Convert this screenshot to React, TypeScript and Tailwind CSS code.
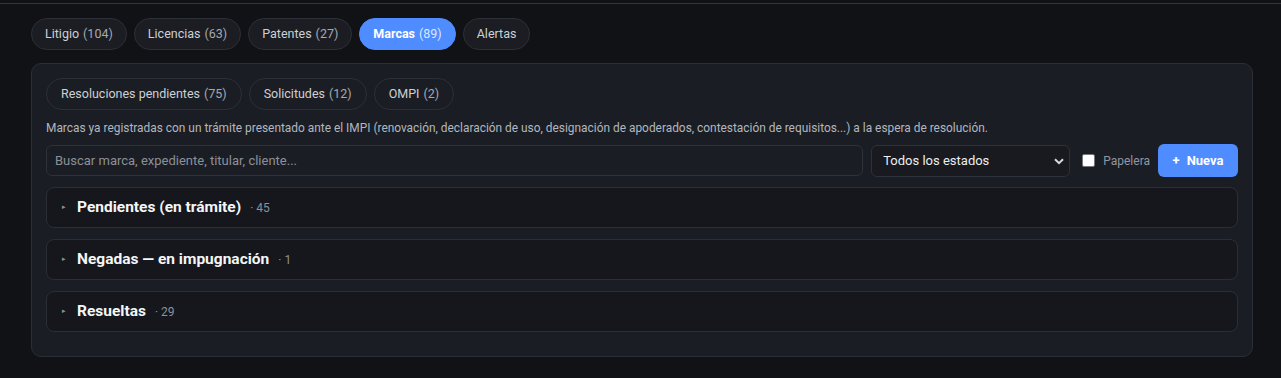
import React from "react";

const tabs = [
  { label: "Litigio", count: "(104)" },
  { label: "Licencias", count: "(63)" },
  { label: "Patentes", count: "(27)" },
  { label: "Marcas", count: "(89)", active: true },
  { label: "Alertas", count: "" },
];

const subtabs = [
  { label: "Resoluciones pendientes", count: "(75)" },
  { label: "Solicitudes", count: "(12)" },
  { label: "OMPI", count: "(2)" },
];

const groups = [
  { title: "Pendientes (en trámite)", count: "45" },
  { title: "Negadas — en impugnación", count: "1" },
  { title: "Resueltas", count: "29" },
];

export default function App() {
  return (
    <div
      className="min-h-[378px] w-full bg-[#111216] text-[#d4d7dc]"
      style={{ fontFamily: 'Roboto, "Noto Sans", Arial, sans-serif' }}
    >
      <div className="h-[4px] border-b border-[#34363d]" />
      <div className="pl-[31px] pr-[28px] pt-[14px]">
        <div className="flex gap-[7px]">
          {tabs.map((t) =>
            t.active ? (
              <div
                key={t.label}
                className="flex h-[32px] items-center rounded-full border border-[#4f8cff] bg-[#4f8cff] px-[13px] text-[12.5px] text-white"
              >
                <span className="font-bold">{t.label}</span>
                <span className="ml-[4px] text-[#dce7ff]">{t.count}</span>
              </div>
            ) : (
              <div
                key={t.label}
                className="flex h-[32px] items-center rounded-full border border-[#2c2f37] bg-[#1b1d23] px-[13px] text-[12.5px] text-[#cdd0d5]"
              >
                <span>{t.label}</span>
                {t.count && <span className="ml-[4px] text-[#a4a9b1]">{t.count}</span>}
              </div>
            )
          )}
        </div>

        <div className="mt-[13px] rounded-[10px] border border-[#2b2e36] bg-[#1b1d24] px-[14px] pt-[14px] pb-[24px]">
          <div className="flex gap-[7px]">
            {subtabs.map((s) => (
              <div
                key={s.label}
                className="flex h-[32px] items-center rounded-full border border-[#2c2f37] bg-[#1b1d24] px-[14px] text-[12.5px] text-[#cdd0d5]"
              >
                <span>{s.label}</span>
                <span className="ml-[4px] text-[#a4a9b1]">{s.count}</span>
              </div>
            ))}
          </div>

          <p className="mt-[10px] text-[11.9px] leading-[16px] text-[#b2b7bf]">
            Marcas ya registradas con un trámite presentado ante el IMPI (renovación, declaración de uso, designación de
            apoderados, contestación de requisitos...) a la espera de resolución.
          </p>

          <div className="mt-[8px] flex items-center gap-[8px]">
            <input
              className="h-[31px] flex-1 rounded-[6px] border border-[#2e3139] bg-[#1b1d24] px-[8px] text-[13px] text-[#d4d7dc] outline-none placeholder:text-[#8b9098]"
              placeholder="Buscar marca, expediente, titular, cliente..."
            />
            <div className="relative flex h-[32px] w-[199px] items-center rounded-[6px] border border-[#2e3139] bg-[#181a20] px-[11px] text-[13px] text-[#eceef1]">
              <span>Todos los estados</span>
              <svg
                className="absolute right-[5px] top-[12px]"
                width="10"
                height="7"
                viewBox="0 0 10 7"
                fill="none"
              >
                <path d="M1 1.2L5 5.2L9 1.2" stroke="#d6d9de" strokeWidth="2" />
              </svg>
            </div>
            <label className="ml-[4px] flex items-center gap-[8px] text-[12px] text-[#8f97a2]">
              <span className="h-[13px] w-[13px] rounded-[2px] border border-[#767676] bg-white" />
              <span>Papelera</span>
            </label>
            <button className="flex h-[33px] w-[80px] items-center justify-center gap-[7px] rounded-[6px] bg-[#4f8cff] text-[13px] font-bold text-white">
              <span>+</span>
              <span>Nueva</span>
            </button>
          </div>

          <div className="mt-[10px] flex flex-col gap-[11px]">
            {groups.map((g) => (
              <div
                key={g.title}
                className="flex h-[41px] items-center rounded-[8px] border border-[#2b2e36] bg-[#15171c] pl-[15px]"
              >
                <span className="text-[7px] text-[#8b919a]">▸</span>
                <span className="ml-[11px] text-[15.5px] font-bold text-[#f4f5f7]">{g.title}</span>
                <span className="ml-[9px] text-[12px] text-[#8b929b]">· {g.count}</span>
              </div>
            ))}
          </div>
        </div>
      </div>
    </div>
  );
}
